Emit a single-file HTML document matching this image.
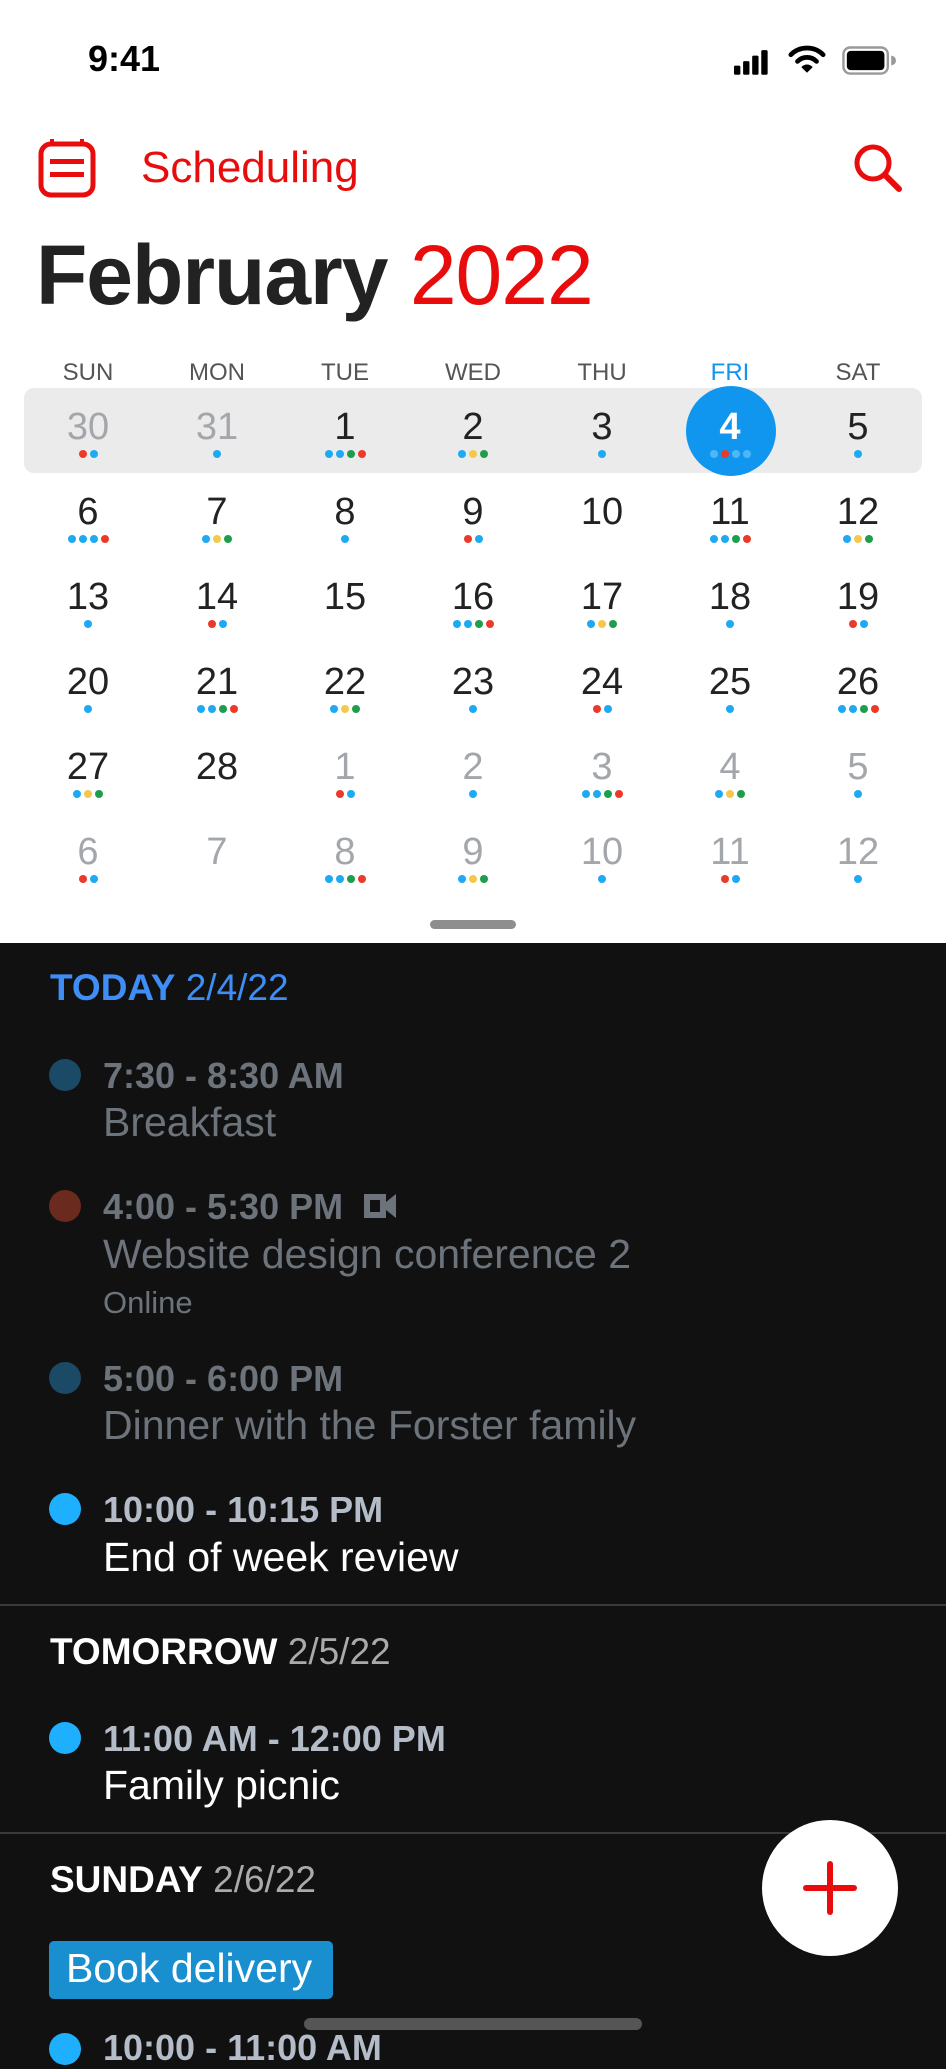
<!DOCTYPE html>
<html><head><meta charset="utf-8">
<style>
*{margin:0;padding:0;box-sizing:border-box}
body{width:946px;height:2048px;overflow:hidden;background:#111112;font-family:"Liberation Sans",sans-serif;position:relative}
.a{position:absolute;white-space:nowrap}
#top{position:absolute;left:0;top:0;width:946px;height:943px;background:#fff}
.wd{position:absolute;top:359px;width:128px;text-align:center;font-size:24px;color:#555}
.num{position:absolute;width:128px;text-align:center;font-size:38px;color:#222;line-height:40px}
.g{color:#a3a6ab}
.dots{position:absolute;width:128px;display:flex;justify-content:center;gap:3px}
.dots i{width:8px;height:8px;border-radius:50%;display:block}
.b{background:#1eaaf2}.r{background:#ec3a2a}.gr{background:#1e9e4c}.y{background:#f2c94c}
.ev-dot{position:absolute;left:49px;width:32px;height:32px;border-radius:50%}
.time{position:absolute;left:103px;font-size:36px;font-weight:bold;color:#6d737b}
.title{position:absolute;left:103px;font-size:41px;color:#6d737b}
.hd{position:absolute;left:50px;font-size:37px;color:#fff}
.sep{position:absolute;left:0;width:946px;height:2px;background:#3a3a3c}
</style></head><body>
<div id="top"></div>
<div class="a" style="left:88px;top:38px;font-size:36px;font-weight:bold;color:#000">9:41</div>
<svg class="a" style="left:734px;top:49px" width="40" height="26" viewBox="0 0 44 28"><rect x="0" y="18" width="7" height="10" rx="1.5"/><rect x="10" y="13" width="7" height="15" rx="1.5"/><rect x="20" y="7" width="7" height="21" rx="1.5"/><rect x="30" y="1" width="7" height="27" rx="1.5"/></svg>
<svg class="a" style="left:788px;top:45px" width="38" height="29" viewBox="0 0 40 30"><path d="M3 10 A24 24 0 0 1 37 10" stroke="#000" stroke-width="5" fill="none" stroke-linecap="round"/><path d="M10 17 A14 14 0 0 1 30 17" stroke="#000" stroke-width="5" fill="none" stroke-linecap="round"/><path d="M14 23 L20 29 L26 23 A8 8 0 0 0 14 23Z"/></svg>
<svg class="a" style="left:842px;top:46px" width="54" height="29" viewBox="0 0 56 30"><rect x="1.5" y="1.5" width="46" height="27" rx="7" fill="none" stroke="#999" stroke-width="2.5"/><rect x="5" y="5" width="39" height="20" rx="4"/><path d="M51 10 v10 a4 4 0 0 0 0-10z" fill="#999"/></svg>
<svg class="a" style="left:38px;top:138px" width="58" height="60" viewBox="0 0 58 60"><rect x="3" y="6" width="52" height="51" rx="10" fill="none" stroke="#e90c0c" stroke-width="5"/><rect x="12" y="21" width="34" height="5" fill="#e90c0c"/><rect x="12" y="34" width="34" height="5" fill="#e90c0c"/><rect x="12" y="1" width="4" height="7" fill="#e90c0c"/><rect x="42" y="1" width="4" height="7" fill="#e90c0c"/></svg>
<div class="a" style="left:141px;top:143px;font-size:44px;color:#e90c0c">Scheduling</div>
<svg class="a" style="left:852px;top:142px" width="52" height="52" viewBox="0 0 52 52"><circle cx="21" cy="21" r="16" fill="none" stroke="#e90c0c" stroke-width="5"/><path d="M33 33 L47 47" stroke="#e90c0c" stroke-width="6" stroke-linecap="round"/></svg>
<div class="a" style="left:36px;top:227px;font-size:84px;font-weight:bold;color:#222;letter-spacing:-1px">February <span style="color:#e90c0c;font-weight:normal">2022</span></div>
<div class="a" style="left:24px;top:388px;width:898px;height:85px;background:#ebebeb;border-radius:10px"></div>
<div class="a" style="left:686px;top:386px;width:90px;height:90px;border-radius:50%;background:#1196f0"></div>
<div id="cal"></div>
<div class="a" style="left:430px;top:920px;width:86px;height:9px;border-radius:5px;background:#8e8e8e"></div>

<div class="hd" style="top:967px;color:#3f8ef6"><b>TODAY</b> 2/4/22</div>
<div class="ev-dot" style="top:1059px;background:#1b4a66"></div>
<div class="time" style="top:1055px">7:30 - 8:30 AM</div>
<div class="title" style="top:1099px">Breakfast</div>
<div class="ev-dot" style="top:1190px;background:#6a2a1e"></div>
<div class="time" style="top:1186px">4:00 - 5:30 PM</div>
<svg class="a" style="left:362px;top:1190px" width="36" height="32" viewBox="0 0 36 32"><path d="M2 4h22v24H2z M24 12 L34 4 V28 L24 20z" fill="#6d737b"/><path d="M8 10h10v12H8z" fill="#111"/></svg>
<div class="title" style="top:1231px">Website design conference 2</div>
<div class="a" style="left:103px;top:1285px;font-size:31px;color:#6d737b">Online</div>
<div class="ev-dot" style="top:1362px;background:#1b4a66"></div>
<div class="time" style="top:1358px">5:00 - 6:00 PM</div>
<div class="title" style="top:1402px">Dinner with the Forster family</div>
<div class="ev-dot" style="top:1493px;background:#1eb0ff"></div>
<div class="time" style="top:1489px;color:#b4bcc8">10:00 - 10:15 PM</div>
<div class="title" style="top:1534px;color:#fff">End of week review</div>
<div class="sep" style="top:1604px"></div>
<div class="hd" style="top:1631px"><b>TOMORROW</b> <span style="color:#aaa">2/5/22</span></div>
<div class="ev-dot" style="top:1722px;background:#1eb0ff"></div>
<div class="time" style="top:1718px;color:#b4bcc8">11:00 AM - 12:00 PM</div>
<div class="title" style="top:1762px;color:#fff">Family picnic</div>
<div class="sep" style="top:1832px"></div>
<div class="hd" style="top:1859px"><b>SUNDAY</b> <span style="color:#aaa">2/6/22</span></div>
<div class="a" style="left:49px;top:1941px;width:284px;height:58px;background:#1a8fd0;border-radius:5px;color:#fff;font-size:41px;padding:4px 0 0 17px">Book delivery</div>
<div class="ev-dot" style="top:2033px;background:#1eb0ff"></div>
<div class="time" style="top:2027px;color:#b4bcc8">10:00 - 11:00 AM</div>
<div class="a" style="left:304px;top:2018px;width:338px;height:12px;border-radius:6px;background:#555"></div>
<div class="a" style="left:762px;top:1820px;width:136px;height:136px;border-radius:50%;background:#fff"></div>
<div class="a" style="left:803px;top:1885px;width:54px;height:6px;background:#e90c0c;border-radius:3px"></div>
<div class="a" style="left:827px;top:1861px;width:6px;height:54px;background:#e90c0c;border-radius:3px"></div>
<script>
var days=["SUN","MON","TUE","WED","THU","FRI","SAT"];
var cx=[88,217,345,473,602,730,858];
var h="";
days.forEach(function(d,i){h+='<div class="wd" style="left:'+(cx[i]-64)+'px'+(i==5?';color:#1196f0':'')+'">'+d+'</div>';});
var rows=[
[["30",1,"r b"],["31",1,"b"],["1",0,"b b gr r"],["2",0,"b y gr"],["3",0,"b"],["4",2,"b r b b"],["5",0,"b"]],
[["6",0,"b b b r"],["7",0,"b y gr"],["8",0,"b"],["9",0,"r b"],["10",0,""],["11",0,"b b gr r"],["12",0,"b y gr"]],
[["13",0,"b"],["14",0,"r b"],["15",0,""],["16",0,"b b gr r"],["17",0,"b y gr"],["18",0,"b"],["19",0,"r b"]],
[["20",0,"b"],["21",0,"b b gr r"],["22",0,"b y gr"],["23",0,"b"],["24",0,"r b"],["25",0,"b"],["26",0,"b b gr r"]],
[["27",0,"b y gr"],["28",0,""],["1",1,"r b"],["2",1,"b"],["3",1,"b b gr r"],["4",1,"b y gr"],["5",1,"b"]],
[["6",1,"r b"],["7",1,""],["8",1,"b b gr r"],["9",1,"b y gr"],["10",1,"b"],["11",1,"r b"],["12",1,"b"]]];
rows.forEach(function(r,ri){var y=428+ri*85;r.forEach(function(c,ci){
var st=c[1]==1?' g':'';var col=c[1]==2?';color:#fff;font-weight:bold':'';
h+='<div class="num'+st+'" style="left:'+(cx[ci]-64)+'px;top:'+(y-21)+'px'+col+'">'+c[0]+'</div>';
if(c[2]){h+='<div class="dots" style="left:'+(cx[ci]-64)+'px;top:'+(y+22)+'px">';c[2].split(" ").forEach(function(k){h+='<i class="'+k+'"'+(c[1]==2&&k=='b'?' style="background:#4db8f5"':'')+'></i>';});h+='</div>';}
});});
document.getElementById("cal").innerHTML=h;
</script>
</body></html>
